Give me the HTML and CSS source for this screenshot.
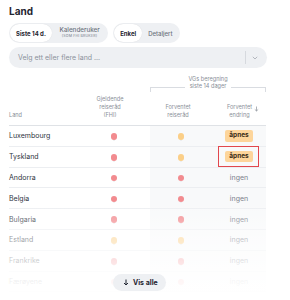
FILE: index.html
```html
<!DOCTYPE html>
<html>
<head>
<meta charset="utf-8">
<title>Land</title>
<link rel="stylesheet" href="styles.css">
</head>
<body>
<div class="page">
  <h1 class="title">Land</h1>

  <div class="controls">
    <div class="seg">
      <span class="seg-item active">Siste 14 d.</span>
      <span class="seg-item two">Kalenderuker<small>(SOM FHI BRUKER)</small></span>
    </div>
    <div class="seg">
      <span class="seg-item active">Enkel</span>
      <span class="seg-item">Detaljert</span>
    </div>
  </div>

  <div class="select">
    <span class="placeholder">Velg ett eller flere land ...</span>
    <span class="sep"></span>
    <svg class="chev" width="6" height="4" viewBox="0 0 6 4"><path d="M0.8 0.8 L3 3 L5.2 0.8" fill="none" stroke="#a3a8b0" stroke-width="0.8"/></svg>
  </div>

  <div class="tablewrap">
    <table class="land">
      <colgroup>
        <col class="c1"><col class="c2"><col class="c3"><col class="c4">
      </colgroup>
      <thead>
        <tr class="grp">
          <th></th><th></th>
          <th colspan="2">
            <div class="bracket">
              <span class="side left"></span>
              <span class="grptext">VGs beregning<br>siste 14 dager</span>
              <span class="side right"></span>
            </div>
          </th>
        </tr>
        <tr class="cols">
          <th class="name">Land</th>
          <th class="h2">Gjeldende<br>reiseråd<br>(FHI)</th>
          <th class="h3">Forventet<br>reiseråd</th>
          <th class="h4"><span class="sorttxt">Forventet<br>endring</span><svg class="sort" width="5" height="6" viewBox="0 0 5 6"><path d="M2.5 0.5 V5 M0.8 3.4 L2.5 5 L4.2 3.4" fill="none" stroke="#8a9099" stroke-width="0.7"/></svg></th>
        </tr>
      </thead>
      <tbody>
        <tr><td>Luxembourg</td><td><span class="dot red"></span></td><td class="vg"><span class="dot orange"></span></td><td class="vg"><span class="badge">åpnes</span></td></tr>
        <tr><td>Tyskland</td><td><span class="dot red"></span></td><td class="vg"><span class="dot orange"></span></td><td class="vg"><span class="badge marked">åpnes</span></td></tr>
        <tr><td>Andorra</td><td><span class="dot red"></span></td><td class="vg"><span class="dot red"></span></td><td class="vg none">ingen</td></tr>
        <tr><td>Belgia</td><td><span class="dot red"></span></td><td class="vg"><span class="dot red"></span></td><td class="vg none">ingen</td></tr>
        <tr><td>Bulgaria</td><td><span class="dot red"></span></td><td class="vg"><span class="dot red"></span></td><td class="vg none">ingen</td></tr>
        <tr><td>Estland</td><td><span class="dot orange"></span></td><td class="vg"><span class="dot orange"></span></td><td class="vg none">ingen</td></tr>
        <tr><td>Frankrike</td><td><span class="dot red"></span></td><td class="vg"><span class="dot red"></span></td><td class="vg none">ingen</td></tr>
        <tr><td>Færøyene</td><td><span class="dot red"></span></td><td class="vg"><span class="dot red"></span></td><td class="vg none">ingen</td></tr>
      </tbody>
    </table>
    <div class="fade"></div>
    <button class="more"><svg width="6" height="7" viewBox="0 0 6 7"><path d="M3 0.5 V6 M1 4 L3 6 L5 4" fill="none" stroke="#1f2430" stroke-width="1"/></svg>Vis alle</button>
  </div>
</div>
</body>
</html>
```

FILE: styles.css
```css
html, body {
	margin: 0;
	height: 300px;
	overflow: hidden;
	background: #fff;
}
body {
	font-family: Inter, "Noto Sans", sans-serif;
	color: #2b303a;
}
.page {
	width: 258px;
	padding: 5px 0 0 9px;
}
.title {
	margin: 0;
	font-size: 10px;
	line-height: 12px;
	font-weight: 700;
	color: #1f2430;
}

/* knapper */
.controls {
	display: flex;
	gap: 5px;
	margin-top: 6px;
}
.seg {
	display: flex;
	background: #eef0f3;
	border-radius: 10px;
	padding: 1px;
	height: 18px;
}
.seg-item {
	display: flex;
	flex-direction: column;
	justify-content: center;
	align-items: center;
	padding: 0 6px;
	border-radius: 9px;
	font-size: 6px;
	font-weight: 500;
	color: #6b717b;
}
.seg-item.active {
	background: #fff;
	color: #1f2430;
	font-weight: 700;
	box-shadow: 0 0 1px rgba(0,0,0,0.12);
}
.seg-item.two {
	padding: 0 7.5px;
	font-size: 6.3px;
	line-height: 7px;
	color: #6e747e;
}
.seg-item small {
	font-size: 3.6px;
	line-height: 5px;
	letter-spacing: 0.15px;
	color: #8c929c;
}

.select {
	display: flex;
	align-items: center;
	height: 21px;
	margin-top: 4px;
	background: #eef0f3;
	border-radius: 11px;
}
.placeholder {
	flex: 1;
	padding-left: 9px;
	font-size: 7px;
	color: #8c929c;
}
.sep {
	width: 1px;
	height: 13px;
	background: #d6d9de;
}
.chev {
	margin: 0 9px 0 6px;
}

/* tabell */
.tablewrap {
	position: relative;
	margin-top: 8px;
}
.land {
	width: 257px;
	border-collapse: collapse;
	table-layout: fixed;
}
.c1 { width: 69px; }
.c2 { width: 72px; }
.c3 { width: 62px; }
.c4 { width: 54px; }

.land th {
	padding: 0;
	font-weight: 400;
	font-size: 5.6px;
	line-height: 8px;
	color: #8a9099;
	text-align: center;
}
.grp th {
	height: 16px;
	vertical-align: top;
}
.bracket {
	display: flex;
	align-items: flex-end;
}
.grptext {
	line-height: 7px;
	padding: 0 3px;
	margin-bottom: 2px;
}
.side {
	flex: 1;
	height: 4px;
	border-top: 1px solid #d9dce1;
}
.side.left { border-left: 1px solid #d9dce1; }
.side.right { border-right: 1px solid #d9dce1; }

.cols th {
	padding: 3px 0 6px;
	vertical-align: bottom;
	border-bottom: 1px solid #dfe2e6;
}
.cols th.name {
	text-align: left;
}
.cols th.h2 { padding-right: 8px; }
.cols th.h3 { padding-right: 6px; }
.cols th.h4 {
	padding-left: 8px;
	white-space: nowrap;
}
.sorttxt {
	display: inline-block;
	vertical-align: bottom;
}
.sort {
	margin-left: 2px;
	vertical-align: 5px;
}

.land td {
	height: 19.8px;
	padding: 0;
	font-size: 7px;
	color: #2e3440;
	text-align: center;
	border-bottom: 1px solid #eceef1;
}
.land td:first-child {
	text-align: left;
}
.land td.vg {
	background: #f8f9fa;
}
.land td.none {
	color: #7b818b;
}

.dot {
	display: inline-block;
	width: 6.5px;
	height: 6.5px;
	border-radius: 50%;
	vertical-align: middle;
	box-shadow: 0 2.5px 0 -2px #fff, 0 3px 0 -2.2px #cdd1d7;
}
.dot.red { background: #f28b8f; }
.dot.orange { background: #fbcf88; }

.badge {
	position: relative;
	display: inline-block;
	padding: 2px 4px;
	line-height: 7.5px;
	font-size: 6.5px;
	font-weight: 700;
	color: #3a2b14;
	background: #fdd59b;
	border-radius: 2px;
}
.badge.marked::after {
	content: "";
	position: absolute;
	top: -5px;
	bottom: -5px;
	left: -7px;
	right: -6px;
	border: 1.5px solid #e2474d;
}

.fade {
	position: absolute;
	left: 0;
	right: 0;
	top: 125px;
	height: 100px;
	background: linear-gradient(rgba(255,255,255,0), rgba(255,255,255,0.5) 35%, rgba(255,255,255,0.9) 75%, #fff);
}
.more {
	position: absolute;
	left: 104px;
	top: 198px;
	display: flex;
	align-items: center;
	gap: 4px;
	height: 17px;
	padding: 0 8px 0 10px;
	border: 0;
	border-radius: 9px;
	background: #eef0f3;
	font-family: Inter, "Noto Sans", sans-serif;
	font-size: 7px;
	font-weight: 700;
	color: #1f2430;
}
```
